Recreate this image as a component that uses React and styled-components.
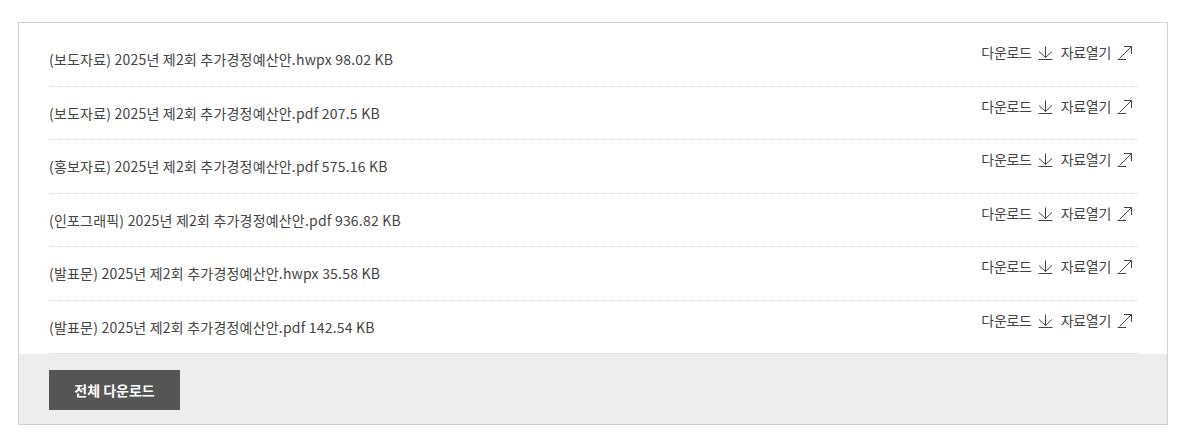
import React from "react";
import styled, { createGlobalStyle } from "styled-components";

const files = [
  { tag: "보도자료", name: "2025년 제2회 추가경정예산안.hwpx", size: "98.02 KB" },
  { tag: "보도자료", name: "2025년 제2회 추가경정예산안.pdf", size: "207.5 KB" },
  { tag: "홍보자료", name: "2025년 제2회 추가경정예산안.pdf", size: "575.16 KB" },
  { tag: "인포그래픽", name: "2025년 제2회 추가경정예산안.pdf", size: "936.82 KB" },
  { tag: "발표문", name: "2025년 제2회 추가경정예산안.hwpx", size: "35.58 KB" },
  { tag: "발표문", name: "2025년 제2회 추가경정예산안.pdf", size: "142.54 KB" },
];

const DownIcon = () => (
  <svg width="15" height="14" viewBox="0 0 15 14" fill="none" stroke="#444" strokeWidth="1">
    <path d="M7.5 0.5 V11.5" />
    <path d="M1 5.5 L7.5 11.5 L14 5.5" />
    <path d="M0.5 13.5 H14.5" />
  </svg>
);

const OpenIcon = () => (
  <svg width="16" height="14" viewBox="0 0 16 14" fill="none" stroke="#444" strokeWidth="1">
    <path d="M2.5 12.5 L14.5 0.5" />
    <path d="M7 0.5 H14.5 V8" />
    <path d="M0.5 13.5 H9" />
  </svg>
);

export default function App() {
  return (
    <>
      <GlobalStyle />
      <Box>
        <List>
          {files.map((f, i) => (
            <Row key={i}>
              <FileName>
                ({f.tag}) {f.name} {f.size}
              </FileName>
              <Actions>
                <ActionLink href="#">
                  다운로드 <DownIcon />
                </ActionLink>
                <ActionLink href="#">
                  자료열기 <OpenIcon />
                </ActionLink>
              </Actions>
            </Row>
          ))}
        </List>
        <Footer>
          <AllButton type="button">전체 다운로드</AllButton>
        </Footer>
      </Box>
    </>
  );
}

const GlobalStyle = createGlobalStyle`
  body {
    margin: 0;
    padding: 22px 16px 0 18px;
    background: #fff;
    font-family: "Noto Sans CJK KR", "Noto Sans", sans-serif;
    color: #444;
  }
`;

const Box = styled.div`
  width: 1148px;
  border: 1px solid #d2d2d2;
  background: #fff;
`;

const List = styled.ul`
  list-style: none;
  margin: 0;
  padding: 10px 30px 0;
`;

const Row = styled.li`
  display: flex;
  justify-content: space-between;
  align-items: flex-start;
  height: 53.5px;
  box-sizing: border-box;
  padding-top: 10px;
  border-bottom: 1px dotted #d6d6d6;
`;

const FileName = styled.span`
  font-size: 14px;
  line-height: 20px;
  margin-top: 6px;
  letter-spacing: 0.2px;
`;

const Actions = styled.div`
  display: flex;
  gap: 8px;
  padding-right: 4px;
`;

const ActionLink = styled.a`
  display: inline-flex;
  align-items: center;
  gap: 6px;
  font-size: 14px;
  line-height: 18px;
  color: #444;
  text-decoration: none;
  letter-spacing: -0.3px;

  svg {
    margin-top: 2px;
  }
`;

const Footer = styled.div`
  background: #ededed;
  padding: 16px 30px 14px;
`;

const AllButton = styled.button`
  display: block;
  width: 131px;
  height: 40px;
  border: 0;
  background: #555;
  color: #fff;
  font-family: inherit;
  font-size: 14px;
  font-weight: 700;
  cursor: pointer;
`;
